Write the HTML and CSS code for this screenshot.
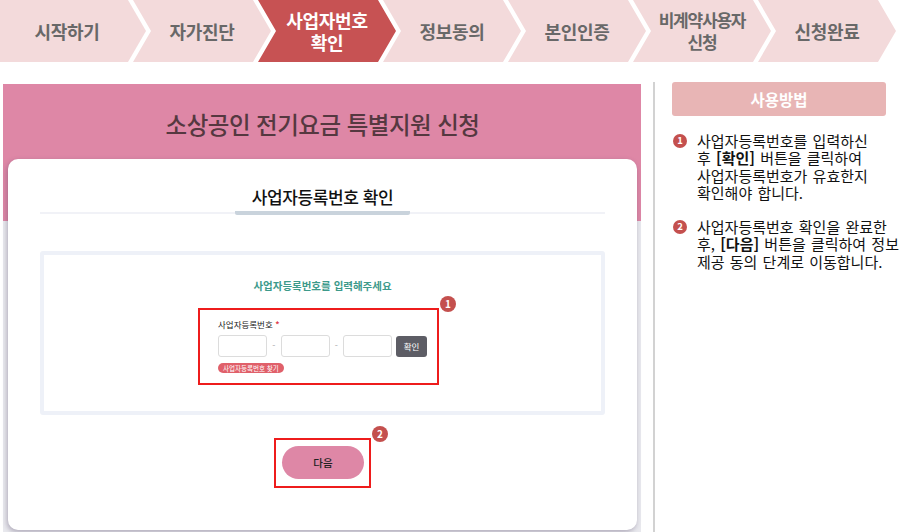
FILE: index.html
```html
<!DOCTYPE html>
<html lang="ko">
<head>
  <meta charset="UTF-8" />
  <meta name="viewport" content="width=device-width, initial-scale=1.0" />
  <title>소상공인 전기요금 특별지원 신청</title>
  <link rel="stylesheet" href="styles.css">
</head>
<body>

  <nav class="steps">
    <div class="step first">시작하기</div>
    <div class="step">자가진단</div>
    <div class="step active">사업자번호<br>확인</div>
    <div class="step">정보동의</div>
    <div class="step">본인인증</div>
    <div class="step tight">비계약사용자<br>신청</div>
    <div class="step">신청완료</div>
  </nav>

  <div class="layout">
    <main class="main">
      <h1 class="main-title">소상공인 전기요금 특별지원 신청</h1>

      <section class="card">
        <div class="card-head">
          <h2>사업자등록번호 확인</h2>
        </div>

        <div class="form-box">
          <p class="form-guide">사업자등록번호를 입력해주세요</p>

          <div class="mark mark-form">
            <span class="num">1</span>
            <label class="field-label">사업자등록번호 <em>*</em></label>
            <div class="biz-row">
              <input class="biz-input" type="text" maxlength="3">
              <span class="dash">-</span>
              <input class="biz-input" type="text" maxlength="2">
              <span class="dash">-</span>
              <input class="biz-input" type="text" maxlength="5">
              <button class="btn-check" type="button">확인</button>
            </div>
            <span class="find-link">사업자등록번호 찾기</span>
          </div>
        </div>

        <div class="mark mark-next">
          <span class="num">2</span>
          <button class="btn-next" type="button">다음</button>
        </div>
      </section>
    </main>

    <aside class="guide">
      <div class="guide-title">사용방법</div>
      <ol class="guide-list">
        <li>
          <span class="num">1</span>
          <p>사업자등록번호를 입력하신<br>후 <b>[확인]</b> 버튼을 클릭하여<br>사업자등록번호가 유효한지<br>확인해야 합니다.</p>
        </li>
        <li>
          <span class="num">2</span>
          <p>사업자등록번호 확인을 완료한<br>후, <b>[다음]</b> 버튼을 클릭하여 정보<br>제공 동의 단계로 이동합니다.</p>
        </li>
      </ol>
    </aside>
  </div>

</body>
</html>
```

FILE: styles.css
```css
/* Reset */
* {
  margin: 0;
  padding: 0;
  box-sizing: border-box;
}

body {
  font-family: 'Noto Sans CJK KR', 'Noto Sans', sans-serif;
  color: #222;
  background: #fff;
}

/* Step bar */
.steps {
  display: flex;
  height: 62px;
}

.step {
  flex: 0 0 138px;
  margin-left: -13px;
  display: flex;
  align-items: center;
  justify-content: center;
  text-align: center;
  background: #f3dadb;
  color: #686868;
  font-size: 18px;
  font-weight: 700;
  line-height: 22px;
  letter-spacing: -0.3px;
  clip-path: polygon(0 0, 120px 0, 100% 50%, 120px 100%, 0 100%, 18px 50%);
}

.step.first {
  flex-basis: 146px;
  margin-left: 0;
  padding-right: 12px;
  clip-path: polygon(0 0, 128px 0, 100% 50%, 128px 100%, 0 100%);
}

.step.active {
  background: #c75253;
  color: #fff;
}

.step.tight {
  font-size: 17px;
  letter-spacing: -1.2px;
}

/* Page */
.layout {
  display: flex;
  margin-top: 20px;
  height: 450px;
}

.main {
  width: 638px;
  margin: 2px 0 0 3px;
  padding: 0 4px 4px 5px;
  background: linear-gradient(#de87a6 0 137px, #e9e9ee 137px);
}

.main-title {
  height: 75px;
  padding-top: 24px;
  text-align: center;
  font-size: 23.5px;
  font-weight: 500;
  line-height: 32px;
  letter-spacing: -0.5px;
  color: #553840;
}

.card {
  background: #fff;
  border-radius: 10px;
  padding: 0 32px 42px;
  box-shadow: -1px 2px 5px rgba(70, 55, 90, 0.35);
}

.card-head {
  padding-top: 26px;
  text-align: center;
  border-bottom: 2px solid #f1f2f7;
}

.card-head h2 {
  display: inline-block;
  width: 175px;
  margin-bottom: -3px;
  padding-bottom: 2px;
  font-size: 17px;
  font-weight: 500;
  line-height: 24px;
  letter-spacing: -0.4px;
  color: #111;
  border-bottom: 4px solid #c9d3dc;
  border-radius: 0 0 2px 2px;
}

/* Form box */
.form-box {
  margin-top: 37px;
  border: 4px solid #eef1f8;
  border-radius: 3px;
  padding: 23px 0 26px;
}

.form-guide {
  text-align: center;
  font-size: 10.5px;
  font-weight: 700;
  line-height: 16px;
  color: #3d9a8b;
}

/* Annotation boxes */
.mark {
  position: relative;
  border: 2px solid #ee1c1c;
}

.num {
  display: inline-flex;
  align-items: center;
  justify-content: center;
  width: 15px;
  height: 15px;
  border-radius: 50%;
  background: #c4504e;
  color: #fff;
  font-size: 10px;
  font-weight: 700;
  line-height: 1;
}

.mark .num {
  position: absolute;
  left: calc(100% + 3px);
  top: -14px;
  width: 16px;
  height: 16px;
}

.mark-form {
  display: flex;
  flex-direction: column;
  align-items: flex-start;
  width: 241px;
  margin: 14px 0 0 154px;
  padding: 8px 10px 10px 18px;
}

.field-label {
  font-size: 8.5px;
  line-height: 12px;
  color: #222;
}

.field-label em {
  font-style: normal;
  font-weight: 700;
  color: #e03c4a;
}

.biz-row {
  display: flex;
  align-items: center;
  height: 22px;
  margin-top: 5px;
}

.biz-input {
  width: 49px;
  height: 22px;
  border: 1px solid #dcdcdc;
  border-radius: 3px;
  background: #fff;
}

.dash {
  flex: 0 0 13.5px;
  text-align: center;
  font-size: 9px;
  line-height: 12px;
  color: #aaa;
}

.btn-check {
  width: 31px;
  height: 21px;
  margin-left: 4px;
  border: 0;
  border-radius: 3px;
  background: #5d5d65;
  color: #fff;
  font-family: inherit;
  font-size: 8.5px;
}

.find-link {
  margin-top: 6px;
  padding: 0 5px;
  height: 10px;
  border-radius: 5px;
  background: #e0606a;
  color: #fff;
  font-size: 6.5px;
  line-height: 10px;
}

.mark-next {
  width: 97px;
  margin: 23px auto 0;
  padding: 6px 6px 7px;
}

.btn-next {
  display: block;
  width: 82px;
  height: 33px;
  border: 0;
  border-radius: 17px;
  background: #de87a6;
  color: #222;
  font-family: inherit;
  font-size: 10.5px;
  font-weight: 500;
}

/* Guide column */
.guide {
  margin-left: 12px;
  padding-left: 17px;
  border-left: 2px solid #d2d2d2;
}

.guide-title {
  width: 214px;
  height: 34px;
  border-radius: 3px;
  background: #e8b5b5;
  color: #fff;
  text-align: center;
  font-size: 15.5px;
  font-weight: 700;
  line-height: 34px;
}

.guide-list {
  list-style: none;
  margin-top: 16px;
}

.guide-list li {
  display: flex;
  align-items: flex-start;
  gap: 10px;
  margin-bottom: 17px;
}

.guide-list .num {
  flex: 0 0 14px;
  width: 14px;
  height: 14px;
  margin: 2px 0 0 1px;
  font-size: 9.5px;
}

.guide-list p {
  white-space: nowrap;
  font-size: 15px;
  line-height: 17.3px;
  word-spacing: 1px;
  color: #111;
}
```
